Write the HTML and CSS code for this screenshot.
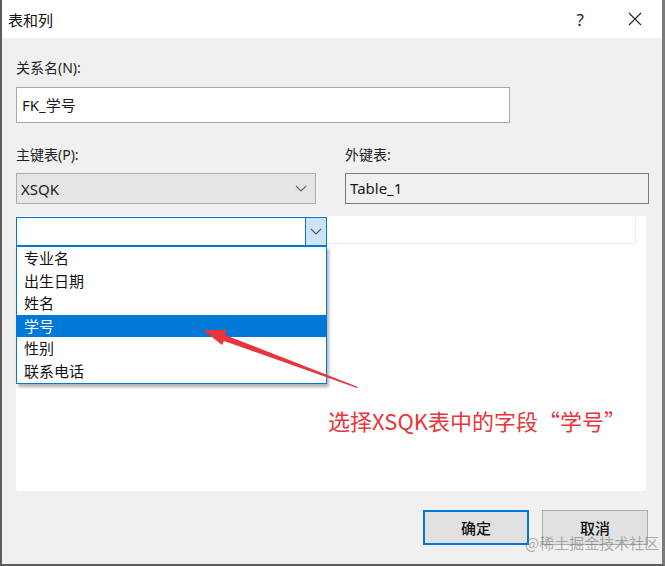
FILE: index.html
```html
<!DOCTYPE html>
<html lang="zh-CN">
<head>
    <meta charset="UTF-8">
    <title>表和列</title>
    <link rel="stylesheet" href="styles.css">
</head>
<body>
    <div class="window">
        <div class="titlebar">
            <span class="title">表和列</span>
            <div class="title-buttons">
                <span class="help">?</span>
                <svg class="close" width="14" height="14" viewBox="0 0 14 14">
                    <path d="M1 1 L13 13 M13 1 L1 13" stroke="#222" stroke-width="1.1" fill="none"/>
                </svg>
            </div>
        </div>

        <div class="content">
            <label class="label label-first">关系名(N):</label>
            <div class="textbox">FK_学号</div>

            <div class="tables-row">
                <div class="field">
                    <label class="label">主键表(P):</label>
                    <div class="combo">
                        <span>XSQK</span>
                        <svg width="12" height="7" viewBox="0 0 12 7"><path d="M1 1 L6 6 L11 1" stroke="#666" stroke-width="1.1" fill="none"/></svg>
                    </div>
                </div>
                <div class="field field-right">
                    <label class="label">外键表:</label>
                    <div class="readonly-box">Table_1</div>
                </div>
            </div>

            <div class="grid">
                <div class="grid-row">
                    <div class="cell-combo">
                        <div class="cell-input"></div>
                        <div class="cell-btn">
                            <svg width="12" height="7" viewBox="0 0 12 7"><path d="M1 1 L6 6 L11 1" stroke="#555" stroke-width="1.1" fill="none"/></svg>
                        </div>
                    </div>
                    <div class="cell-rest"></div>
                </div>

                <ul class="dropdown">
                    <li>专业名</li>
                    <li>出生日期</li>
                    <li>姓名</li>
                    <li class="selected">学号</li>
                    <li>性别</li>
                    <li>联系电话</li>
                </ul>

                <div class="note">选择XSQK表中的字段“学号”</div>
            </div>

            <div class="buttons">
                <button class="btn btn-default">确定</button>
                <button class="btn">取消</button>
            </div>
        </div>

        <svg class="arrow" width="665" height="566" viewBox="0 0 665 566">
            <polygon points="357,388 224,341 222,345 203,330 227,330 225,335 358,387" fill="#e8353c"/>
        </svg>

        <div class="watermark">@稀土掘金技术社区</div>
    </div>
</body>
</html>
```

FILE: styles.css
```css
* {
    box-sizing: border-box;
    margin: 0;
    padding: 0;
}

body {
    background-color: #4a4a4a;
    font-family: "Noto Sans", "Noto Sans CJK SC", sans-serif;
    color: #1a1a1a;
}

.window {
    position: relative;
    width: 665px;
    height: 566px;
    background-color: #f0f0f0;
    border-left: 2px solid #5c5c5c;
    border-right: 3px solid #7a7a7a;
    border-bottom: 2px solid #5c5c5c;
    overflow: hidden;
}

.titlebar {
    height: 38px;
    background-color: #fff;
    display: flex;
    align-items: center;
    justify-content: space-between;
    padding: 0 20px 0 6px;
}

.title {
    font-size: 15px;
    color: #111;
}

.title-buttons {
    display: flex;
    align-items: center;
    gap: 44px;
}

.help {
    font-size: 17px;
    color: #222;
}

.content {
    padding: 0 13px 0 14px;
}

.label {
    display: block;
    font-size: 14px;
    line-height: 18px;
    color: #222;
}

.label-first {
    margin-top: 21px;
}

.textbox {
    margin-top: 10px;
    width: 494px;
    height: 36px;
    background-color: #fff;
    border: 1px solid #a8a8a8;
    font-size: 15px;
    line-height: 34px;
    padding-left: 5px;
}

.tables-row {
    display: flex;
    margin-top: 23px;
}

.field .label {
    margin-bottom: 9px;
}

.field-right {
    margin-left: 29px;
}

.combo {
    width: 300px;
    height: 31px;
    background-color: #e5e5e5;
    border: 1px solid #adadad;
    display: flex;
    align-items: center;
    justify-content: space-between;
    padding: 0 8px 0 4px;
    font-size: 15px;
}

.readonly-box {
    width: 304px;
    height: 31px;
    background-color: #f0f0f0;
    border: 1px solid #7a7a7a;
    font-size: 15px;
    line-height: 29px;
    padding-left: 4px;
}

.grid {
    position: relative;
    margin-top: 12px;
    width: 630px;
    height: 275px;
    background-color: #fff;
    border-radius: 3px;
}

.grid-row {
    display: flex;
    height: 29px;
    padding-top: 1px;
}

.cell-combo {
    display: flex;
    width: 311px;
    height: 29px;
    border: 1px solid #0078d7;
}

.cell-input {
    flex: 1;
    background-color: #fff;
}

.cell-btn {
    width: 21px;
    background-color: #cce4f7;
    border-left: 1px solid #0078d7;
    display: flex;
    align-items: center;
    justify-content: center;
}

.cell-rest {
    width: 309px;
    height: 27px;
    border-right: 1px solid #ececec;
    border-bottom: 1px solid #ececec;
}

.dropdown {
    position: absolute;
    left: 0;
    top: 30px;
    width: 311px;
    list-style: none;
    background-color: #fff;
    border: 1px solid #0078d7;
    box-shadow: 2px 3px 3px rgba(0, 0, 0, 0.3);
    padding-bottom: 1px;
}

.dropdown li {
    height: 22.5px;
    line-height: 22.5px;
    font-size: 15px;
    padding-left: 7px;
    color: #111;
}

.dropdown li.selected {
    background-color: #0078d7;
    color: #fff;
}

.note {
    position: absolute;
    left: 312px;
    top: 188px;
    font-family: "Noto Sans CJK SC", sans-serif;
    font-size: 22px;
    color: #e8353c;
    white-space: nowrap;
}

.buttons {
    display: flex;
    justify-content: flex-end;
    gap: 13px;
    margin-top: 19px;
    padding-right: 1px;
}

.btn {
    width: 106px;
    height: 35px;
    background-color: #e1e1e1;
    border: 1px solid #adadad;
    font-family: "Noto Sans CJK SC", sans-serif;
    font-size: 15px;
    font-weight: 500;
    color: #111;
}

.btn-default {
    border: 2px solid #0078d7;
}

.arrow {
    position: absolute;
    left: -2px;
    top: 0;
    pointer-events: none;
}

.watermark {
    position: absolute;
    left: 523px;
    top: 532px;
    font-family: "Noto Sans CJK SC", sans-serif;
    font-size: 15px;
    color: rgba(110, 110, 110, 0.55);
    white-space: nowrap;
}
```
